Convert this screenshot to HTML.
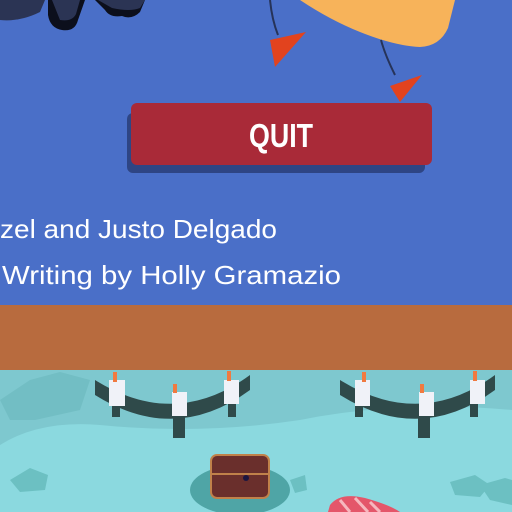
<!DOCTYPE html>
<html><head><style>
body{margin:0;width:512px;height:512px;overflow:hidden;background:#8bd9df;font-family:"Liberation Sans",sans-serif}
svg{display:block}
</style></head><body>
<svg width="512" height="512" viewBox="0 0 512 512" xmlns="http://www.w3.org/2000/svg">
<rect width="512" height="305" fill="#4a6fc8"/>
<path d="M0 0H45L40 12Q20 22 0 20Z" fill="#2b3454"/>
<path d="M48 0H85L78 20Q75 32 62 30Q50 28 48 15Z" fill="#0c0f1c"/>
<path d="M52 0H80L76 14Q72 22 60 20Z" fill="#2b3454"/>
<path d="M95 0H145L140 12Q132 20 122 16Q110 18 105 10Z" fill="#0c0f1c"/>
<path d="M98 0H145L140 8Q130 12 112 8Z" fill="#2b3454"/>
<path d="M300 0H455L448 28Q440 46 420 47Q395 46 360 32Q330 20 300 0Z" fill="#f7b35a"/>
<path d="M270 0Q272 20 278 35" stroke="#263359" stroke-width="2" fill="none"/>
<path d="M270 40L306 32L275 67Z" fill="#e2431e"/>
<path d="M381 40Q385 55 395 75" stroke="#263359" stroke-width="2" fill="none"/>
<path d="M390 86L422 75L400 102Z" fill="#e2431e"/>
<rect x="127" y="113" width="298" height="60" rx="6" fill="#2e4584"/>
<rect x="131" y="103" width="301" height="62" rx="6" fill="#a92a38"/>
<text x="281" y="147" text-anchor="middle" font-family="Liberation Sans" font-weight="bold" font-size="33" fill="#fff" textLength="64" lengthAdjust="spacingAndGlyphs">QUIT</text>
<text x="0" y="238" font-size="26" fill="#fff" textLength="277" lengthAdjust="spacingAndGlyphs">zel and Justo Delgado</text>
<text x="2" y="284" font-size="26" fill="#fff" textLength="339" lengthAdjust="spacingAndGlyphs">Writing by Holly Gramazio</text>
<rect y="305" width="512" height="65" fill="#b86b3e"/>
<rect y="370" width="512" height="142" fill="#8bd9df"/>
<path d="M0 370H512V410Q400 400 300 420Q200 435 100 425Q40 420 0 445Z" fill="#7ec8cf"/>
<path d="M35 420L80 410L90 380L60 372L30 380L0 400L10 420Z" fill="#6bb8bd" opacity=".6"/>
<path d="M10 480L30 468L48 475L45 490L20 492Z" fill="#6cc0c2"/>
<path d="M450 482L475 475L490 485L480 497L455 495Z" fill="#6cc0c2"/>
<path d="M480 485L505 478L512 480V505L490 500Z" fill="#6cc0c2"/>
<ellipse cx="240" cy="490" rx="50" ry="25" fill="#4fa5a6"/>
<path d="M290 480L305 475L307 490L295 493Z" fill="#6cc0c2"/>
<g fill="#2f4a4a">
<path d="M95 380Q175 430 250 375L250 390Q175 445 95 395Z"/>
<path d="M340 380Q420 430 495 375L495 390Q420 445 340 395Z"/>
<rect x="173" y="410" width="12" height="28"/><rect x="418" y="410" width="12" height="28"/>
<rect x="112" y="395" width="8" height="22"/><rect x="228" y="395" width="8" height="22"/>
<rect x="355" y="395" width="8" height="22"/><rect x="470" y="395" width="8" height="22"/>
</g>
<g fill="#f0f2f8">
<rect x="109" y="380" width="16" height="26"/><rect x="172" y="392" width="15" height="24"/><rect x="224" y="380" width="15" height="24"/>
<rect x="355" y="380" width="15" height="26"/><rect x="419" y="392" width="15" height="24"/><rect x="470" y="380" width="15" height="24"/>
</g>
<g fill="#f07a40">
<rect x="113" y="372" width="4" height="10"/><rect x="173" y="384" width="4" height="9"/><rect x="227" y="371" width="4" height="10"/>
<rect x="362" y="372" width="4" height="10"/><rect x="420" y="384" width="4" height="9"/><rect x="473" y="371" width="4" height="10"/>
</g>
<rect x="211" y="455" width="58" height="43" rx="6" fill="#6a2f2c" stroke="#c0814a" stroke-width="2"/>
<line x1="212" y1="474" x2="268" y2="474" stroke="#c0814a" stroke-width="2"/>
<circle cx="246" cy="478" r="3" fill="#1c1640"/>
<path d="M330 505Q340 492 365 498Q390 505 400 512H328Z" fill="#e4566a"/>
<path d="M340 500L350 512M355 498L368 512M370 502L380 512" stroke="#f6b7be" stroke-width="3"/>
</svg>
</body></html>
